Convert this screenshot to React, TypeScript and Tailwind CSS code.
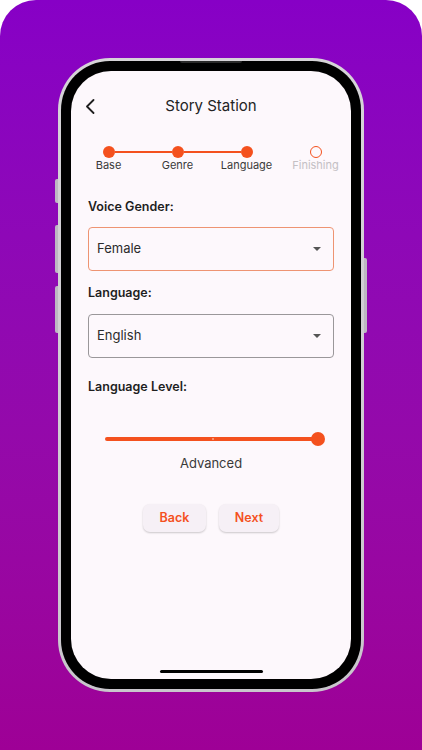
import React from "react";

function Step({ label, left, right, state }: { label: string; left: boolean; right: boolean; state: "done" | "todo" }) {
  return (
    <div className="flex flex-col items-center">
      <div className="flex h-[12px] w-full items-center">
        <div className={"h-[2px] flex-1 " + (left ? "bg-[#F4511E]" : "bg-transparent")} />
        {state === "done" ? (
          <div className="h-[12px] w-[12px] rounded-full bg-[#F4511E]" />
        ) : (
          <div className="h-[12px] w-[12px] rounded-full border border-[#F4511E] bg-transparent" />
        )}
        <div className={"h-[2px] flex-1 " + (right ? "bg-[#F4511E]" : "bg-transparent")} />
      </div>
      <div className={"mt-[1px] text-[11px] leading-[12px] " + (state === "done" ? "text-[#3a3a3a]" : "text-[#c4c0c4]")}>{label}</div>
    </div>
  );
}

function Select({ value, focused }: { value: string; focused?: boolean }) {
  return (
    <div
      className={
        "flex h-[44px] items-center justify-between rounded-[4px] border pl-[8px] pr-[12px] " +
        (focused ? "border-[#EE9472]" : "border-[#9a979a]")
      }
    >
      <span className="text-[13px] text-[#2c2c2c]">{value}</span>
      <svg width="8" height="4" viewBox="0 0 8 4">
        <polygon points="0,0 8,0 4,4" fill="#555" />
      </svg>
    </div>
  );
}

export default function App() {
  return (
    <div className="h-[750px] w-[422px] bg-white" style={{ fontFamily: "Inter, 'Noto Sans', sans-serif" }}>
      <div className="flex h-[750px] w-[422px] justify-center rounded-t-[36px] bg-gradient-to-b from-[#8700C6] to-[#9E0096] pt-[58px]">
        <div className="relative h-[634px] w-[306px] rounded-[52px] bg-gradient-to-b from-[#d6d4d8] to-[#c9c6cc] p-[3px]">
          <div className="absolute left-[-3px] top-[121px] h-[24px] w-[3px] rounded-l-[2px] bg-[#bdb8c2]" />
          <div className="absolute left-[-3px] top-[167px] h-[48px] w-[3px] rounded-l-[2px] bg-[#bdb8c2]" />
          <div className="absolute left-[-3px] top-[228px] h-[47px] w-[3px] rounded-l-[2px] bg-[#bdb8c2]" />
          <div className="absolute right-[-3px] top-[200px] h-[75px] w-[3px] rounded-r-[2px] bg-[#bdb8c2]" />
          <div className="h-full w-full rounded-[49px] bg-black p-[10px]">
            <div className="relative flex h-full w-full flex-col overflow-hidden rounded-[40px] bg-[#FDF8FC]">
              <div className="mt-[23px] grid h-[24px] grid-cols-[40px_1fr_40px] items-center">
                <div className="pl-[14px]">
                  <svg width="10" height="15" viewBox="0 0 10 15">
                    <path d="M8.5 1 L2 7.5 L8.5 14" fill="none" stroke="#1f1f1f" strokeWidth="1.8" strokeLinecap="round" strokeLinejoin="round" />
                  </svg>
                </div>
                <div className="text-center text-[15px] text-[#232323]">Story Station</div>
                <div />
              </div>
              <div className="mt-[28px] ml-[3px] grid w-[276px] grid-cols-4">
                <Step label="Base" left={false} right={true} state="done" />
                <Step label="Genre" left={true} right={true} state="done" />
                <Step label="Language" left={true} right={false} state="done" />
                <Step label="Finishing" left={false} right={false} state="todo" />
              </div>
              <div className="flex flex-col px-[17px]">
                <div className="mt-[28px] text-[12.5px] font-semibold leading-[16px] text-[#1f1f1f]">Voice Gender:</div>
                <div className="mt-[12px]">
                  <Select value="Female" focused />
                </div>
                <div className="mt-[14px] text-[12.5px] font-semibold leading-[16px] text-[#1f1f1f]">Language:</div>
                <div className="mt-[13px]">
                  <Select value="English" />
                </div>
                <div className="mt-[21px] text-[12.5px] font-semibold leading-[16px] text-[#1f1f1f]">Language Level:</div>
                <div className="mt-[34px] flex h-[20px] items-center pl-[17px] pr-[9px]">
                  <div className="relative h-[4px] flex-1 rounded-full bg-[#F4511E]">
                    <div className="absolute left-1/2 top-[1px] h-[2px] w-[2px] rounded-full bg-[#f7a98d]" />
                  </div>
                  <div className="-ml-[7px] h-[14px] w-[14px] rounded-full bg-[#F4511E]" />
                </div>
                <div className="mt-[5px] text-center text-[13px] leading-[18px] text-[#3a3a3a]">Advanced</div>
                <div className="mt-[32px] flex justify-center gap-[13px]">
                  <button className="h-[28px] w-[63px] rounded-[7px] bg-[#F6F0F6] text-[12.5px] font-semibold text-[#F4511E] shadow-[0_1px_2px_rgba(0,0,0,0.2)]">
                    Back
                  </button>
                  <button className="h-[28px] w-[60px] rounded-[7px] bg-[#F6F0F6] text-[12.5px] font-semibold text-[#F4511E] shadow-[0_1px_2px_rgba(0,0,0,0.2)]">
                    Next
                  </button>
                </div>
              </div>
              <div className="mt-auto mb-[6px] flex justify-center">
                <div className="h-[3px] w-[103px] rounded-full bg-black" />
              </div>
            </div>
          </div>
          <div className="absolute left-[122px] top-[3px] h-[2px] w-[62px] rounded-b-[2px] bg-[#2a2a2a]" />
        </div>
      </div>
    </div>
  );
}
